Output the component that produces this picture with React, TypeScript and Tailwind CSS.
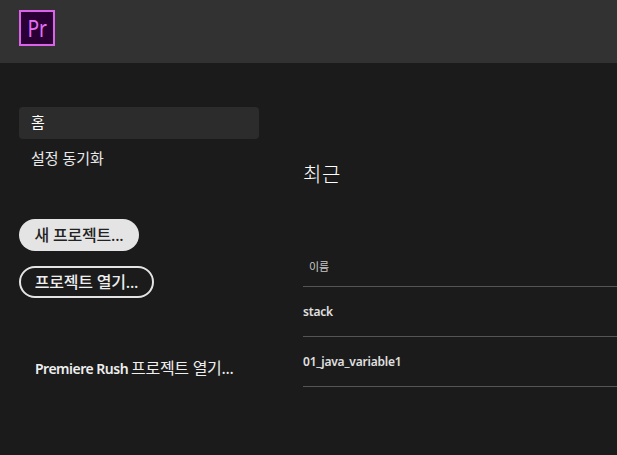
const font = "font-['Noto_Sans','Noto_Sans_CJK_KR',sans-serif]"

const recent = ["stack", "01_java_variable1"]

export default function App() {
  return (
    <div className={`h-[455px] w-[617px] overflow-hidden bg-[#1b1b1b] text-[#e8e8e8] ${font}`}>
      <header className="flex h-[63px] items-start bg-[#323232] pl-[19px] pt-[10px]">
        <div className="flex h-[36px] w-[36px] items-center justify-center border-2 border-[#dc62ea] bg-[#2a0034] text-[24px] leading-none text-[#e56df2]">
          <span className="scale-x-[0.8]">Pr</span>
        </div>
      </header>
      <div className="flex">
        <aside className="w-[303px] shrink-0 pl-[19px] pt-[44px]">
          <div className="flex h-[32px] w-[240px] items-center rounded-[4px] bg-[#2c2c2c] px-[12px] pb-[2px] text-[15px] text-white">
            홈
          </div>
          <div className="flex h-[38px] items-center px-[12px] text-[15px] text-[#e8e8e8]">설정 동기화</div>
          <div className="mt-[42px] flex flex-col items-start gap-[15px]">
            <button className="flex h-[32px] w-[120px] items-center justify-center rounded-full bg-[#e4e4e4] pb-[1px] text-[16px] font-medium tracking-[-0.2px] text-[#222]">
              새 프로젝트...
            </button>
            <button className="flex h-[32px] w-[135px] items-center justify-center rounded-full border-2 border-[#e4e4e4] pb-[1px] text-[16px] font-medium tracking-[-0.2px] text-[#eee]">
              프로젝트 열기...
            </button>
          </div>
          <div className="mt-[58px] flex items-baseline gap-[3px] pl-[16px] text-[14px] font-semibold tracking-[-0.5px] text-[#eee]">
            Premiere Rush
            <span className="text-[16px] font-normal tracking-[-0.3px]">프로젝트 열기...</span>
          </div>
        </aside>
        <main className="min-w-0 flex-1">
          <h1 className="mt-[98px] text-[20px] leading-[28px] tracking-[0.5px] font-light text-white">최근</h1>
          <div className="mt-[60px] flex h-[38px] items-center border-b border-[#555] pl-[6px] text-[11px] text-[#c8c8c8]">
            이름
          </div>
          {recent.map((name) => (
            <div
              key={name}
              className="flex h-[50px] items-center border-b border-[#555] text-[12px] font-semibold tracking-[-0.2px] text-[#e0e0e0]"
            >
              {name}
            </div>
          ))}
        </main>
      </div>
    </div>
  )
}
